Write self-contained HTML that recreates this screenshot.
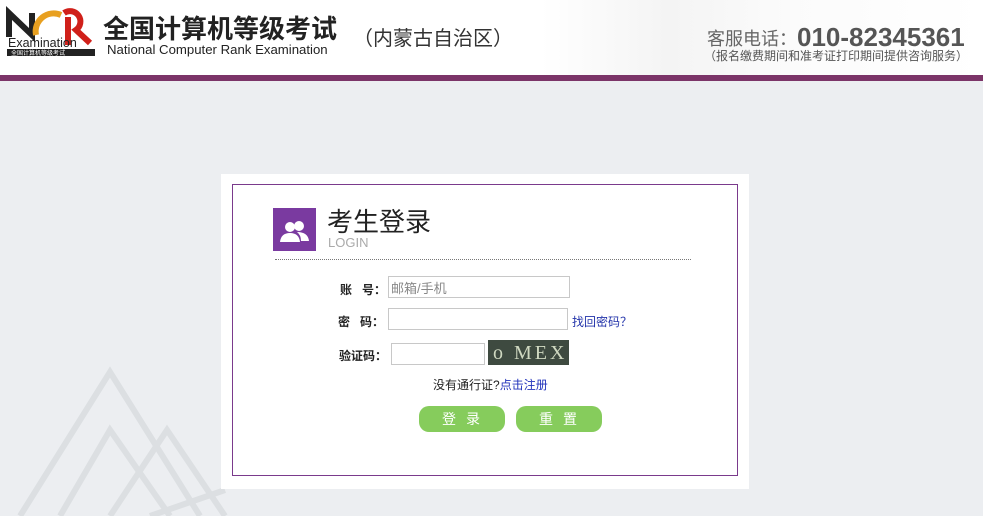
<!DOCTYPE html>
<html><head><meta charset="utf-8"><style>
*{margin:0;padding:0;box-sizing:border-box}
body{width:983px;height:516px;overflow:hidden;background:#eceef1;font-family:"Liberation Sans","Noto Sans CJK SC",sans-serif;position:relative}
.hdr{position:absolute;left:0;top:0;width:983px;height:76px;background:linear-gradient(90deg,#fff 0%,#fff 55%,#f4f4f4 68%,#fbfbfb 80%,#fff 100%)}
.bar{position:absolute;left:0;top:75px;width:983px;height:6px;background:#7b3468}
.abs{position:absolute;white-space:nowrap}
.panel{position:absolute;left:221px;top:174px;width:528px;height:315px;background:#fff}
.box{position:absolute;left:232px;top:184px;width:506px;height:292px;border:1px solid #7a3a8c}
input{position:absolute;border:1px solid #c8c8c8;height:22px;background:#fff;font:13px "Liberation Sans","Noto Sans CJK SC",sans-serif;color:#888;padding-left:2px}
.lbl{font-size:12px;color:#222;font-weight:bold}
.btn{position:absolute;top:406px;width:86px;height:26px;background:#86cc5c;border-radius:10px;color:#fff;font-size:14px;text-align:center;line-height:26px;letter-spacing:10px;padding-left:8px}
</style></head><body>
<svg class="abs" style="left:0;top:300px" width="983" height="216"><g fill="none" stroke="#dcdfe2" stroke-width="6">
<polyline points="20,216 110,72 200,216"/><polyline points="60,216 110,130 170,216"/><polyline points="110,216 167,130 225,216"/><polyline points="150,216 225,190"/></g></svg>
<div class="hdr"></div>
<div class="bar"></div>
<svg class="abs" style="left:6px;top:5px" width="90" height="52">
<path d="M3 32 V8 L26 30 V8" stroke="#222" stroke-width="6" fill="none"/>
<path d="M55 10 A18 18 0 0 0 30 30" stroke="#e8a020" stroke-width="6" fill="none"/>
<path d="M58 8 A10 10 0 0 1 70 25 L84 38 M62 12 V40" stroke="#d0201a" stroke-width="6" fill="none"/>
<text x="2" y="42" font-size="12.5" font-family="Liberation Sans" fill="#222">Examination</text>
<rect x="1" y="44" width="88" height="7" fill="#222"/>
<text x="5" y="50" font-size="6" font-family="Noto Sans CJK SC" fill="#fff">全国计算机等级考试</text></svg>
<div class="abs" style="left:103px;top:9px;font-size:26px;font-weight:bold;color:#222">全国计算机等级考试</div>
<div class="abs" style="left:107px;top:42px;font-size:13.2px;color:#222">National Computer Rank Examination</div>
<div class="abs" style="left:353px;top:22px;font-size:20px;color:#333">（内蒙古自治区）</div>
<div class="abs" style="left:707px;top:21px;font-size:18px;color:#666">客服电话：<b style="font-size:26px;color:#555;position:relative;top:1px">010-82345361</b></div>
<div class="abs" style="left:704px;top:47px;font-size:12px;color:#555">（报名缴费期间和准考证打印期间提供咨询服务）</div>

<div class="panel"></div>
<div class="box"></div>
<div class="abs" style="left:273px;top:208px;width:43px;height:43px;background:#7a3aa0">
<svg width="43" height="43"><g fill="#fff"><circle cx="17" cy="19" r="5"/><path d="M7 34 Q8 25 17 25 Q26 25 27 34Z"/><circle cx="26" cy="18" r="5"/><path d="M24 24 Q35 24 36 33 H28 Q28 27 24 24Z"/></g></svg></div>
<div class="abs" style="left:327px;top:207px;font-size:26px;line-height:1.2;color:#222">考生登录</div>
<div class="abs" style="left:328px;top:235px;font-size:13px;color:#aaa">LOGIN</div>
<div class="abs" style="left:275px;top:259px;width:416px;border-top:1px dotted #777"></div>

<div class="abs lbl" style="left:340px;top:281px">账&nbsp;&nbsp;&nbsp;号：</div>
<input style="left:388px;top:276px;width:182px" value="邮箱/手机">
<div class="abs lbl" style="left:338px;top:313px">密&nbsp;&nbsp;&nbsp;码：</div>
<input style="left:388px;top:308px;width:180px">
<div class="abs" style="left:572px;top:313px;font-size:12px;color:#2233aa">找回密码？</div>
<div class="abs lbl" style="left:339px;top:347px">验证码：</div>
<input style="left:391px;top:343px;width:94px">
<div class="abs" style="left:488px;top:340px;width:81px;height:25px;background:#3e4a40;color:#cfd8c0;font:20px 'Liberation Serif',serif;padding-left:5px;letter-spacing:3px;line-height:27px">o MEX</div>
<div class="abs" style="left:433px;top:376px;font-size:12px;color:#222">没有通行证?<span style="color:#2233bb">点击注册</span></div>
<div class="btn" style="left:419px">登录</div>
<div class="btn" style="left:516px">重置</div>
</body></html>
